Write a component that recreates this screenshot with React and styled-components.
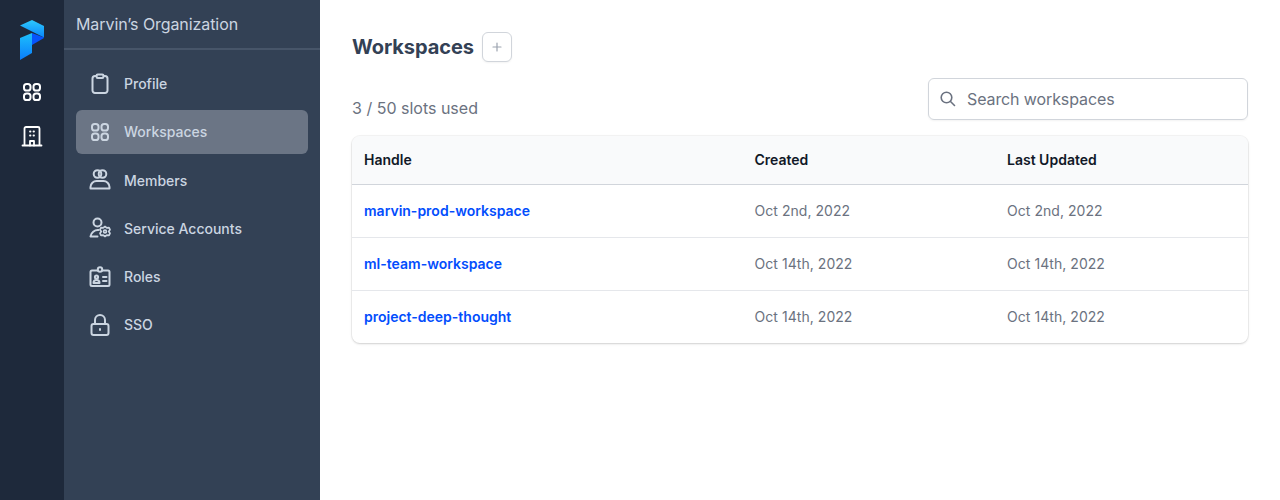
import React from "react";
import styled, { createGlobalStyle } from "styled-components";

const Global = createGlobalStyle`
  html, body { margin: 0; padding: 0; background: #fff; }
  body { font-family: Inter, "Liberation Sans", sans-serif; }
  * { box-sizing: border-box; }
`;
const Page = styled.div`display: flex; height: 500px; width: 1280px; overflow: hidden;`;
const Rail = styled.nav`width: 64px; flex: none; background: #1e293b; display: flex; flex-direction: column; align-items: center; padding-top: 20px;`;
const RailIcon = styled.div`color: #fff; height: 24px; margin-top: ${p => p.$mt}px; display: flex;`;
const Side = styled.aside`width: 256px; flex: none; background: #334155; display: flex; flex-direction: column;`;
const OrgTitle = styled.div`height: 50px; border-bottom: 2px solid #475569; padding: 0 12px; display: flex; align-items: center; color: #cbd5e1; font-size: 16px; font-weight: 400; letter-spacing: -0.08px;`;
const SideList = styled.div`padding: 11.8px 12px 0; display: flex; flex-direction: column;`;
const SideItem = styled.div`height: 44px; margin-bottom: 4.2px; border-radius: 6px; display: flex; align-items: center; gap: 12px; padding: 0 12px; color: #cbd5e1; font-size: 14px; font-weight: 500; background: ${p => p.$active ? "#6b7585" : "transparent"};`;
const Main = styled.main`flex: 1; padding: 32px; min-width: 0;`;
const TitleRow = styled.div`display: flex; align-items: center; gap: 8px; height: 30px;`;
const Title = styled.h1`margin: 0; font-size: 20px; line-height: 28px; font-weight: 700; letter-spacing: -0.06px; color: #334155;`;
const AddButton = styled.button`width: 30px; height: 30px; padding: 0; border: 1px solid #d1d5db; border-radius: 6px; background: #fff; color: #9ca3af; display: flex; align-items: center; justify-content: center; box-shadow: 0 1px 2px rgba(0,0,0,.05);`;
const MetaRow = styled.div`display: flex; justify-content: space-between; align-items: flex-end; margin-top: 16px;`;
const Slots = styled.div`font-size: 16px; line-height: 24px; color: #6b7280;`;
const SearchBox = styled.div`width: 320px; height: 42px; border: 1px solid #d1d5db; border-radius: 6px; display: flex; align-items: center; padding-left: 9px; gap: 9px; color: #6b7280; font-size: 16px; letter-spacing: -0.11px; box-shadow: 0 1px 2px rgba(0,0,0,.05);`;
const Card = styled.div`margin-top: 16px; border-radius: 8px; box-shadow: 0 1px 3px rgba(0,0,0,.1), 0 1px 2px rgba(0,0,0,.06); overflow: hidden; outline: 1px solid rgba(0,0,0,.04);`;
const Table = styled.div`display: grid; grid-template-columns: 390.5px 252.5px 1fr;`;
const Head = styled.div`height: 49px; background: #f9fafb; border-bottom: 1px solid #d1d5db; display: flex; align-items: center; padding: 0 0 2px 12px; font-size: 14px; font-weight: 600; color: #111827;`;
const Cell = styled.div`height: ${p => p.$last ? 52 : 53}px; display: flex; align-items: center; padding: 0 0 ${p => p.$last ? 1 : 2}px 12px; font-size: 14px; letter-spacing: 0.05px; color: #6b7280; border-bottom: ${p => p.$last ? "none" : "1px solid #e5e7eb"};`;
const Link = styled.a`color: #024dfd; font-weight: 600; letter-spacing: 0; text-decoration: none;`;

const S = { fill: "none", stroke: "currentColor", strokeWidth: 2, strokeLinecap: "round", strokeLinejoin: "round" };
const Svg = ({ children, size = 24 }) => <svg width={size} height={size} viewBox="0 0 24 24" {...S}>{children}</svg>;
const Grid = () => <Svg><rect x="4" y="4" width="6.5" height="6.5" rx="2.6" /><rect x="13.5" y="4" width="6.5" height="6.5" rx="2.6" /><rect x="4" y="13.5" width="6.5" height="6.5" rx="2.6" /><rect x="13.5" y="13.5" width="6.5" height="6.5" rx="2.6" /></Svg>;
const Building = () => <Svg><path d="M4.5 21.5V4.5A1.5 1.5 0 0 1 6 3h12a1.5 1.5 0 0 1 1.5 1.5v17M2.5 21.5h19" strokeWidth="1.8" /><path d="M10 21.5V17h4v4.5M10 7.5h.5M13.5 7.5h.5M10 11.5h.5M13.5 11.5h.5" strokeWidth="1.8" /></Svg>;
const Clipboard = () => <Svg><path d="M8.5 4H7a2.5 2.5 0 0 0-2.5 2.5v12A2.5 2.5 0 0 0 7 21h10a2.5 2.5 0 0 0 2.5-2.5v-12A2.5 2.5 0 0 0 17 4h-1.5" /><rect x="8.5" y="2.5" width="7" height="3.5" rx="1.2" /></Svg>;
const Members = () => <Svg><circle cx="9.5" cy="6" r="3.8" /><circle cx="14.5" cy="6" r="3.8" /><path d="M2.5 20.5V19c0-3.5 3-6 6-6h7c3 0 6 2.500 6 6v1.500z" /></Svg>;
const Service = () => <Svg><circle cx="9.500" cy="6.500" r="4" /><path d="M2.500 20.500a7.500 7.500 0 0 1 8-6.500M2.500 20.500H9.500" /><path d="M17 10.500l1.800 1.400 2.200-.2 1 2-1.300 1.800 1.300 1.800-1 2-2.200-.2-1.800 1.400-1.800-1.400-2.200.2-1-2 1.300-1.800-1.300-1.800 1-2 2.200.2z" strokeWidth="1.700" /><circle cx="17" cy="15.500" r="1.400" strokeWidth="1.700" /></Svg>;
const Roles = () => <Svg><path d="M9.500 5.500H4A1.500 1.500 0 0 0 2.500 7v12.500A1.500 1.500 0 0 0 4 21h16a1.500 1.500 0 0 0 1.500-1.500V7A1.500 1.500 0 0 0 20 5.500h-5.500" /><circle cx="12" cy="4.500" r="2.200" /><circle cx="8.500" cy="12" r="1.600" /><path d="M5.500 18a3 3 0 0 1 6 0zM15 12h3.500M15 16h3.500" /></Svg>;
const Lock = () => <Svg><rect x="3.500" y="11" width="17" height="11" rx="2" /><path d="M7 11V7a5 5 0 0 1 10 0v4M12 16v1" /></Svg>;
const Plus = () => <svg width="10" height="10" viewBox="0 0 10 10" fill="none" stroke="currentColor" strokeWidth="1.200" strokeLinecap="round"><path d="M5 1v8M1 5h8" /></svg>;
const Search = () => <svg width="20" height="20" viewBox="0 0 20 20" fill="none" stroke="#6b7280" strokeWidth="1.600" strokeLinecap="round"><circle cx="8.500" cy="8.500" r="5.300" /><path d="M12.500 12.500L16.500 16.500" /></svg>;
const Logo = () => (
  <svg width="24" height="40" viewBox="0 0 24 40">
    <defs>
      <linearGradient id="a" x1="0" y1="0" x2="0" y2="1"><stop offset="0" stopColor="#2dc9fc" /><stop offset="1" stopColor="#0a86fb" /></linearGradient>
      <linearGradient id="c" x1="0" y1="0" x2="0" y2="1"><stop offset="0" stopColor="#1dc0fc" /><stop offset="1" stopColor="#0a7dfb" /></linearGradient>
    </defs>
    <path d="M0 5.500L12 0l12 6V17.500z" fill="url(#a)" />
    <path d="M12 13l12 4.500V18L12 25z" fill="#0654fb" />
    <path d="M0 18l12-5V33L0 40z" fill="url(#c)" />
  </svg>
);

const rows = [
  ["marvin-prod-workspace", "Oct 2nd, 2022"],
  ["ml-team-workspace", "Oct 14th, 2022"],
  ["project-deep-thought", "Oct 14th, 2022"],
];
const nav = [
  [Clipboard, "Profile"], [Grid, "Workspaces", true], [Members, "Members"],
  [Service, "Service Accounts"], [Roles, "Roles"], [Lock, "SSO"],
];

export default function App() {
  return (
    <Page>
      <Global />
      <Rail>
        <Logo />
        <RailIcon $mt={20}><Grid /></RailIcon>
        <RailIcon $mt={20}><Building /></RailIcon>
      </Rail>
      <Side>
        <OrgTitle>Marvin’s Organization</OrgTitle>
        <SideList>
          {nav.map(([I, t, a]) => <SideItem key={t} $active={a}><I />{t}</SideItem>)}
        </SideList>
      </Side>
      <Main>
        <TitleRow><Title>Workspaces</Title><AddButton aria-label="Add"><Plus /></AddButton></TitleRow>
        <MetaRow>
          <Slots>3 / 50 slots used</Slots>
          <SearchBox><Search />Search workspaces</SearchBox>
        </MetaRow>
        <Card>
          <Table>
            <Head>Handle</Head><Head>Created</Head><Head>Last Updated</Head>
            {rows.map(([n, d], i) => (
              <React.Fragment key={n}>
                <Cell $last={i === 2}><Link>{n}</Link></Cell>
                <Cell $last={i === 2}>{d}</Cell>
                <Cell $last={i === 2}>{d}</Cell>
              </React.Fragment>
            ))}
          </Table>
        </Card>
      </Main>
    </Page>
  );
}
